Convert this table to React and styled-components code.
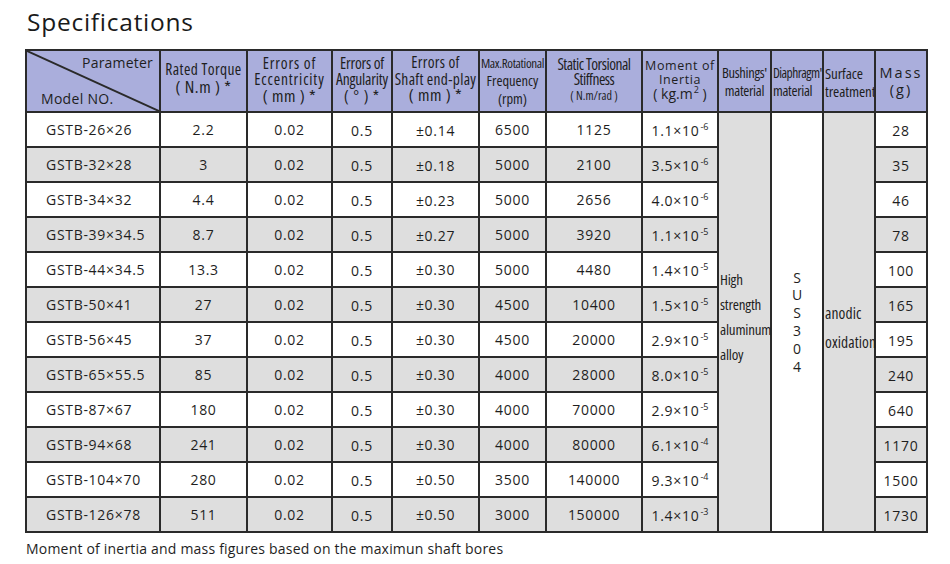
import React from "react";
import styled, { createGlobalStyle } from "styled-components";

const GlobalStyle = createGlobalStyle`
  html, body { margin: 0; padding: 0; background: #ffffff; }
  body { font-family: "Open Sans", "DejaVu Sans", sans-serif; color: #1e1e1e; }
`;

const FONT = `"Open Sans", "DejaVu Sans", sans-serif`;

const Page = styled.div`
  width: 950px;
  height: 564px;
  box-sizing: border-box;
  padding: 5px 0 0 25px;
  overflow: hidden;
`;

const Title = styled.h1`
  margin: 0 0 0 2px;
  font-family: ${FONT};
  font-weight: 400;
  font-size: 24.5px;
  line-height: 34px;
  letter-spacing: 0.75px;
  color: #1a1a1a;
`;

const Table = styled.table`
  margin-top: 10px;
  border-collapse: collapse;
  table-layout: fixed;
  width: 903px;
  border: 2px solid #2a2a2a;
`;

const HeadRow = styled.tr`
  height: 62px;
`;

const Th = styled.th`
  background: #aaaedc;
  border: 2px solid #2a2a2a;
  padding: 0;
  vertical-align: middle;
  text-align: ${(p) => p.$align || "center"};
  font-weight: 400;
  color: #1e1e1e;
  overflow: hidden;
  white-space: nowrap;
`;

const DiagTh = styled(Th)`
  position: relative;
  text-align: left;
`;

const Diagonal = styled.svg`
  position: absolute;
  left: 0;
  top: 0;
  width: 100%;
  height: 100%;
  pointer-events: none;
`;

const CornerLabel = styled.div`
  font-family: ${FONT};
  font-size: 14px;
  letter-spacing: ${(p) => p.$ls}px;
  line-height: 16px;
  text-align: ${(p) => p.$align};
  padding: ${(p) => p.$pad};
`;

const HeadText = styled.div`
  font-family: ${FONT};
  font-stretch: ${(p) => (p.$wide ? 100 : 75)}%;
  font-size: ${(p) => p.$size || 15.5}px;
  line-height: ${(p) => p.$lh || 16.5}px;
  letter-spacing: ${(p) => p.$ls || 0}px;
  text-align: ${(p) => p.$align || "center"};
  padding-left: ${(p) => p.$pl || 0}px;
  margin-top: ${(p) => p.$mt || 0}px;
`;

const Small = styled.span`
  font-size: ${(p) => p.$size || 11}px;
  letter-spacing: ${(p) => p.$ls || 0}px;
`;

const Row = styled.tr`
  height: 35px;
  background: ${(p) => (p.$alt ? "#dedede" : "#ffffff")};
`;

const Td = styled.td`
  border: 2px solid #2a2a2a;
  padding: ${(p) => (p.$shift > 0 ? `${p.$shift * 2}px 0 0` : `0 0 ${-p.$shift * 2}px`)};
  padding-left: ${(p) => p.$pl || 0}px;
  font-family: ${FONT};
  font-size: 14px;
  letter-spacing: 0.7px;
  text-align: ${(p) => p.$align || "center"};
  vertical-align: middle;
  white-space: nowrap;
  color: #1e1e1e;
`;

const Sup = styled.sup`
  font-size: 9px;
  letter-spacing: 0;
  vertical-align: 6px;
  line-height: 0;
  margin-left: 1px;
`;

const MergedTd = styled.td`
  border: 2px solid #2a2a2a;
  background: ${(p) => (p.$gray ? "#dedede" : "#ffffff")};
  vertical-align: middle;
  text-align: ${(p) => p.$align || "left"};
  padding: ${(p) => p.$pad || "0"};
  color: #1e1e1e;
`;

const MergedText = styled.div`
  font-family: ${FONT};
  font-stretch: ${(p) => (p.$wide ? 100 : 75)}%;
  font-size: ${(p) => p.$size}px;
  line-height: ${(p) => p.$lh}px;
  letter-spacing: ${(p) => p.$ls || 0}px;
  white-space: nowrap;
`;

const Footer = styled.p`
  margin: 6px 0 0 1px;
  font-family: ${FONT};
  font-size: 14px;
  line-height: 20px;
  letter-spacing: 0.2px;
  color: #1e1e1e;
`;

const widths = [134, 87, 85, 60, 87, 67, 96, 76, 53, 52, 52, 52];

const rows = [
  ["GSTB-26×26", "2.2", "0.02", "0.5", "±0.14", "6500", "1125", "1.1", "-6", "28"],
  ["GSTB-32×28", "3", "0.02", "0.5", "±0.18", "5000", "2100", "3.5", "-6", "35"],
  ["GSTB-34×32", "4.4", "0.02", "0.5", "±0.23", "5000", "2656", "4.0", "-6", "46"],
  ["GSTB-39×34.5", "8.7", "0.02", "0.5", "±0.27", "5000", "3920", "1.1", "-5", "78"],
  ["GSTB-44×34.5", "13.3", "0.02", "0.5", "±0.30", "5000", "4480", "1.4", "-5", "100"],
  ["GSTB-50×41", "27", "0.02", "0.5", "±0.30", "4500", "10400", "1.5", "-5", "165"],
  ["GSTB-56×45", "37", "0.02", "0.5", "±0.30", "4500", "20000", "2.9", "-5", "195"],
  ["GSTB-65×55.5", "85", "0.02", "0.5", "±0.30", "4000", "28000", "8.0", "-5", "240"],
  ["GSTB-87×67", "180", "0.02", "0.5", "±0.30", "4000", "70000", "2.9", "-5", "640"],
  ["GSTB-94×68", "241", "0.02", "0.5", "±0.30", "4000", "80000", "6.1", "-4", "1170"],
  ["GSTB-104×70", "280", "0.02", "0.5", "±0.50", "3500", "140000", "9.3", "-4", "1500"],
  ["GSTB-126×78", "511", "0.02", "0.5", "±0.50", "3000", "150000", "1.4", "-3", "1730"],
];

function DataRow({ r, i }) {
  const [model, torque, ecc, ang, play, freq, stiff, mant, exp, mass] = r;
  return (
    <Row $alt={i % 2 === 1}>
      <Td $align="left" $pl={19} $shift={0}>{model}</Td>
      <Td $shift={-0.5}>{torque}</Td>
      <Td $shift={-0.5}>{ecc}</Td>
      <Td $shift={1}>{ang}</Td>
      <Td $shift={i < 4 ? 1 : 0}>{play}</Td>
      <Td $shift={0}>{freq}</Td>
      <Td $shift={-0.5}>{stiff}</Td>
      <Td $shift={1}>
        {mant}×10<Sup>{exp}</Sup>
      </Td>
      {i === 0 && (
        <>
          <MergedTd rowSpan={12} $gray $pad="0 0 10px 1px">
            <MergedText $size={15} $lh={25} $ls={-0.2}>
              High<br />strength<br />aluminum<br />alloy
            </MergedText>
          </MergedTd>
          <MergedTd rowSpan={12} $align="center" $pad="0">
            <MergedText $wide $size={14} $lh={17.8}>
              S<br />U<br />S<br />3<br />0<br />4
            </MergedText>
          </MergedTd>
          <MergedTd rowSpan={12} $gray $pad="12px 0 0 1px">
            <MergedText $size={15.5} $lh={29} $ls={0.1}>
              anodic<br />oxidation
            </MergedText>
          </MergedTd>
        </>
      )}
      <Td $shift={1}>{mass}</Td>
    </Row>
  );
}

export default function App() {
  return (
    <>
      <GlobalStyle />
      <Page>
        <Title>Specifications</Title>
        <Table>
          <colgroup>
            {widths.map((w, i) => (
              <col key={i} style={{ width: w }} />
            ))}
          </colgroup>
          <thead>
            <HeadRow>
              <DiagTh>
                <Diagonal viewBox="0 0 100 100" preserveAspectRatio="none">
                  <line x1="0" y1="0" x2="100" y2="100" stroke="#2a2a2a" strokeWidth="2" vectorEffect="non-scaling-stroke" />
                </Diagonal>
                <CornerLabel $align="right" $ls={0.2} $pad="0 6px 2px 0">Parameter</CornerLabel>
                <CornerLabel $align="left" $ls={0.3} $pad="18px 0 0 14px">Model NO.</CornerLabel>
              </DiagTh>
              <Th>
                <HeadText $lh={17} $ls={0.4} $mt={-6}>
                  Rated Torque<br />
                  <Small $size={17} $ls={0.6}>( N.m ) *</Small>
                </HeadText>
              </Th>
              <Th>
                <HeadText $ls={0.85} $mt={-3}>
                  Errors of<br />Eccentricity<br />
                  <Small $size={17} $ls={0.6}>( mm ) *</Small>
                </HeadText>
              </Th>
              <Th>
                <HeadText $ls={-0.2} $mt={-3}>
                  Errors of<br />Angularity<br />
                  <Small $size={16} $ls={0.8}>( ° ) *</Small>
                </HeadText>
              </Th>
              <Th>
                <HeadText $ls={0.3} $mt={-4}>
                  Errors of<br />Shaft end-play<br />
                  <Small $size={17} $ls={0.6}>( mm ) *</Small>
                </HeadText>
              </Th>
              <Th>
                <HeadText $size={13} $lh={17} $ls={-0.35}>
                  Max.Rotational<br />
                  <Small $size={14.5} $ls={0}>Frequency</Small><br />
                  <Small $size={14.5} $ls={0}>(rpm)</Small>
                </HeadText>
              </Th>
              <Th>
                <HeadText $size={15.5} $lh={15} $ls={-0.5} $mt={-2}>
                  Static Torsional<br />Stiffness<br />
                  <Small $size={12} $ls={0}>( N.m/rad )</Small>
                </HeadText>
              </Th>
              <Th>
                <HeadText $wide $size={12.5} $lh={14} $ls={0.6} $mt={-2}>
                  Moment of<br />Inertia<br />
                  <Small $size={14}>( kg.m<Sup>2</Sup> )</Small>
                </HeadText>
              </Th>
              <Th>
                <HeadText $size={14.5} $lh={18} $ls={-0.3} $mt={2}>
                  Bushings'<br />material
                </HeadText>
              </Th>
              <Th $align="left">
                <HeadText $size={13.5} $lh={18} $ls={-0.55} $align="left" $pl={1} $mt={2}>
                  Diaphragm'<br />
                  <Small $size={14.5} $ls={-0.3}>material</Small>
                </HeadText>
              </Th>
              <Th $align="left">
                <HeadText $size={15} $lh={18} $ls={-0.1} $align="left" $pl={1} $mt={2}>
                  Surface<br />treatment
                </HeadText>
              </Th>
              <Th>
                <HeadText $wide $size={14.5} $lh={17} $ls={2} $mt={-1}>
                  Mass<br />(g)
                </HeadText>
              </Th>
            </HeadRow>
          </thead>
          <tbody>
            {rows.map((r, i) => (
              <DataRow key={r[0]} r={r} i={i} />
            ))}
          </tbody>
        </Table>
        <Footer>Moment of inertia and mass figures based on the maximun shaft bores</Footer>
      </Page>
    </>
  );
}
